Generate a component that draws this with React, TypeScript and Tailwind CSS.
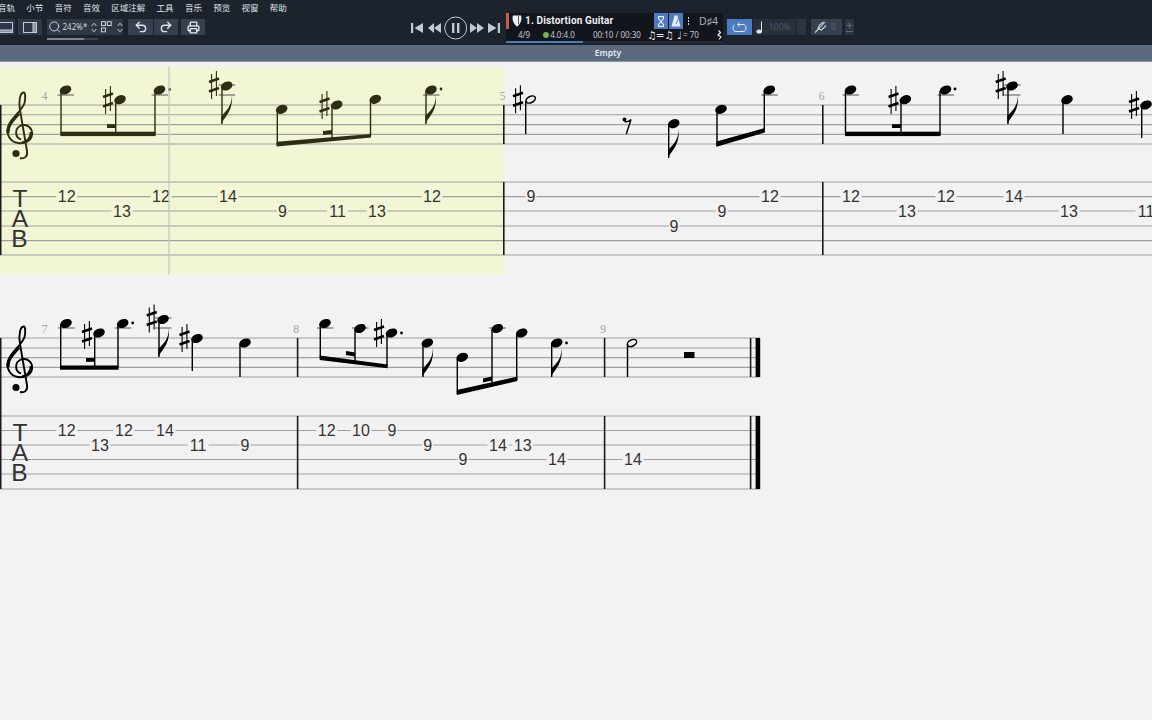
import { Printer, Redo2, Search, Undo2 } from "lucide-react"

const MENU = ["音轨", "小节", "音符", "音效", "区域注解", "工具", "音乐", "预览", "视窗", "帮助"]

type NoteData = {
  x: number
  y: number
  sx: number
  end: number
  ledgers?: number[]
  sharp?: [number, number]
  dot?: [number, number]
  flag?: boolean
  hollow?: boolean
}

type TabNum = [string, number, number]

// tab numbers: text, center x, string y
const TAB_TOP: TabNum[] = [
  ["12", 66.7, 196.6], ["13", 122, 211], ["12", 161, 196.6], ["14", 228, 196.6], ["9", 282.5, 211],
  ["11", 337.5, 211], ["13", 377, 211], ["12", 432, 196.6], ["9", 531, 196.6], ["9", 674, 226],
  ["9", 722, 211], ["12", 770, 196.6], ["12", 851, 196.6], ["13", 907, 211], ["12", 946, 196.6],
  ["14", 1014, 196.6], ["13", 1069, 211], ["11", 1146, 211],
]

const TAB_BOTTOM: TabNum[] = [
  ["12", 66.7, 430.5], ["13", 100, 445], ["12", 124, 430.5], ["14", 165, 430.5], ["11", 198, 445],
  ["9", 245, 445], ["12", 326.7, 430.5], ["10", 361, 430.5], ["9", 392, 430.5], ["9", 427.7, 445],
  ["9", 463, 459.5], ["14", 498, 445], ["13", 522.7, 445], ["14", 557, 459.5], ["14", 633, 459.5],
]

const SELECTED_NOTES: NoteData[] = [
  { x: 65.5, y: 90, sx: 61, end: 134, ledgers: [95] },
  { x: 120, y: 99.7, sx: 115.7, end: 134, sharp: [108, 100] },
  { x: 159.5, y: 90, sx: 155, end: 134, ledgers: [95], dot: [169.5, 89.5] },
  { x: 226.7, y: 86, sx: 222, end: 124, ledgers: [85, 95], sharp: [214, 85], flag: true },
  { x: 281.7, y: 109.3, sx: 277.3, end: 146 },
  { x: 336.7, y: 105, sx: 332, end: 138, sharp: [324.5, 105] },
  { x: 375.3, y: 99.3, sx: 370.5, end: 136 },
  { x: 431, y: 90, sx: 426, end: 124, ledgers: [95], dot: [441, 89], flag: true },
]

const PLAIN_NOTES: NoteData[] = [
  { x: 530.7, y: 99.5, sx: 525.7, end: 134, sharp: [518, 99.3], hollow: true },
  { x: 673.7, y: 123.7, sx: 668.7, end: 158, flag: true },
  { x: 721, y: 109.3, sx: 717, end: 146 },
  { x: 769.3, y: 90, sx: 764.3, end: 132, ledgers: [95] },
  { x: 850.5, y: 90, sx: 845.5, end: 134, ledgers: [95] },
  { x: 905.3, y: 99.7, sx: 901, end: 134, sharp: [893.5, 100] },
  { x: 945.5, y: 90, sx: 940, end: 134, ledgers: [95], dot: [955, 89] },
  { x: 1012, y: 86, sx: 1008, end: 124, ledgers: [85, 95], sharp: [1000.7, 85], flag: true },
  { x: 1067, y: 99.7, sx: 1063, end: 134 },
  { x: 1146, y: 105, sx: 1141.7, end: 138, sharp: [1134, 105] },
]

const SECOND_NOTES: NoteData[] = [
  { x: 66, y: 323.5, sx: 60.7, end: 367, ledgers: [328] },
  { x: 99, y: 333, sx: 94.7, end: 367, sharp: [87, 335] },
  { x: 122.7, y: 323.5, sx: 118, end: 367, ledgers: [328], dot: [132.7, 323] },
  { x: 163, y: 319.5, sx: 159, end: 357, ledgers: [318, 328], sharp: [151.7, 318.5], flag: true },
  { x: 197, y: 338.5, sx: 192.3, end: 371, sharp: [184.5, 338] },
  { x: 245, y: 343, sx: 240, end: 377 },
  { x: 325, y: 323.5, sx: 320.3, end: 358, ledgers: [328] },
  { x: 360, y: 328.5, sx: 355, end: 362, ledgers: [328] },
  { x: 391.5, y: 333, sx: 387, end: 366, sharp: [379, 333], dot: [401.5, 333] },
  { x: 427.3, y: 343, sx: 423, end: 377, flag: true },
  { x: 462.3, y: 357.3, sx: 457.3, end: 394 },
  { x: 497.3, y: 328.5, sx: 492, end: 384, ledgers: [328] },
  { x: 521.7, y: 333, sx: 516.7, end: 380 },
  { x: 556.7, y: 343, sx: 551.7, end: 377, dot: [566.5, 343], flag: true },
  { x: 632, y: 343, sx: 627.5, end: 377, hollow: true },
]

function Sharp({ x, y }: { x: number; y: number }) {
  return (
    <g>
      <path d={`M${x - 2.4} ${y - 11}V${y + 14}M${x + 2.4} ${y - 14}V${y + 11}`} stroke="currentColor" strokeWidth="1.1" />
      <path d={`M${x - 5} ${y - 3}L${x + 5} ${y - 6.5}M${x - 5} ${y + 6.5}L${x + 5} ${y + 3}`} stroke="currentColor" strokeWidth="2.6" />
    </g>
  )
}

function Note({ x, y, sx, end, ledgers, sharp, dot, flag, hollow }: NoteData) {
  return (
    <g>
      {ledgers?.map((ly) => (
        <line key={ly} x1={x - 8} x2={x + 8.5} y1={ly} y2={ly} stroke="#555" strokeWidth="1" />
      ))}
      {hollow ? (
        <ellipse cx={x} cy={y} rx="5" ry="3.1" transform={`rotate(-28 ${x} ${y})`} fill="none" stroke="currentColor" strokeWidth="1.5" />
      ) : (
        <ellipse cx={x} cy={y} rx="6" ry="4.3" transform={`rotate(-22 ${x} ${y})`} fill="currentColor" />
      )}
      <line x1={sx} x2={sx} y1={y + 1} y2={end} stroke="currentColor" strokeWidth="1.4" />
      {flag && (
        <path
          d={`M${sx - 0.7} ${end}C${sx + 3} ${end - 8} ${sx + 11} ${end - 12} ${sx + 10} ${end - 29}C${sx + 9.6} ${end - 17} ${sx + 4} ${end - 13} ${sx - 0.7} ${end - 8}Z`}
          fill="currentColor"
        />
      )}
      {sharp && <Sharp x={sharp[0]} y={sharp[1]} />}
      {dot && <circle cx={dot[0]} cy={dot[1]} r="1.4" fill="currentColor" />}
    </g>
  )
}

function Clef({ dy = 0 }: { dy?: number }) {
  return (
    <g transform={`translate(0 ${dy})`} fill="none" stroke="currentColor">
      <path
        d="M21 139.5C15 137.5 14 128.5 21 125.5C28 123.5 33 129 32 135C31 141 24 144 18 143C10 142 6 134 8 127C10 119 22 111 24.5 103C26 97 25 92 23.5 92.5C20 93 18.5 101 20 110L27 151C28 157 24 159 20 158"
        strokeWidth="1.9"
      />
      <path d="M8 133C7.5 125 14 118.5 19 113.5" strokeWidth="3.2" />
      <path d="M31 132C31.5 138 27 142 22 142.7" strokeWidth="2.6" />
      <circle cx="16" cy="153.5" r="3.6" fill="currentColor" stroke="none" />
    </g>
  )
}

function TabLetters({ dy = 0 }: { dy?: number }) {
  return (
    <g className="font-['Liberation_Sans',sans-serif] text-[24.5px] fill-[#333]" textAnchor="middle">
      <text x="20" y={206.8 + dy}>T</text>
      <text x="20" y={227.2 + dy}>A</text>
      <text x="19.5" y={247 + dy}>B</text>
    </g>
  )
}

function TabNumbers({ items, bg }: { items: TabNum[]; bg: (x: number) => string }) {
  return (
    <g>
      {items.map(([n, x, y]) => {
        const w = n.length === 1 ? 11 : 21
        return (
          <g key={`${n}-${x}`}>
            <rect x={x - w / 2} y={y - 5} width={w} height="10" fill={bg(x)} />
            <text x={x} y={y + 5.7} textAnchor="middle" className="font-['Liberation_Sans',sans-serif] text-[16px] fill-[#333]">
              {n}
            </text>
          </g>
        )
      })}
    </g>
  )
}

function BarNumber({ x, y, n }: { x: number; y: number; n: string }) {
  return (
    <text x={x} y={y} textAnchor="middle" className="font-['Liberation_Serif',serif] text-[11.5px] fill-[#a3a3a3]">
      {n}
    </text>
  )
}

function Lines({ ys, x2 }: { ys: number[]; x2: number }) {
  return (
    <g stroke="#a0a0a0" strokeWidth="1.1">
      {ys.map((y) => (
        <line key={y} x1="0" x2={x2} y1={y} y2={y} />
      ))}
    </g>
  )
}

function Bar({ x, y1, y2, w = 1.6 }: { x: number; y1: number; y2: number; w?: number }) {
  return <line x1={x} x2={x} y1={y1} y2={y2} stroke="#1a1a1a" strokeWidth={w} />
}

function FirstSystem() {
  const tabBg = (x: number) => (x < 504 ? "#f3f6d5" : "#f2f2f2")
  return (
    <svg width="1152" height="218" viewBox="0 62 1152 218" className="block shrink-0">
      <rect x="0" y="67" width="504" height="208" fill="#f3f6d5" />
      <Lines ys={[105, 114.8, 124.6, 134.4, 144]} x2={1152} />
      <Lines ys={[182, 196.6, 211, 226, 240.6, 255]} x2={1152} />
      <TabNumbers items={TAB_TOP} bg={tabBg} />
      {[503.8, 822.8].map((x) => (
        <g key={x}>
          <Bar x={x} y1={105} y2={144} />
          <Bar x={x} y1={182} y2={255} />
        </g>
      ))}
      <Bar x={0.5} y1={105} y2={255} w={2} />
      <BarNumber x={44.5} y={100} n="4" />
      <BarNumber x={502.5} y={100} n="5" />
      <BarNumber x={821.5} y={100} n="6" />
      <TabLetters />
      <g className="text-[#2c2d12]">
        <Clef />
        {SELECTED_NOTES.map((n) => (
          <Note key={n.x} {...n} />
        ))}
        <rect x="60.4" y="131.7" width="95.2" height="4.4" fill="currentColor" />
        <rect x="107" y="124.2" width="9" height="3.8" fill="currentColor" />
        <polygon points="276.7,141.8 371,134 371,137.6 276.7,146.6" fill="currentColor" />
        <polygon points="323,131 332,130 332,134 323,135" fill="currentColor" />
      </g>
      <g className="text-black">
        {PLAIN_NOTES.map((n) => (
          <Note key={n.x} {...n} />
        ))}
        <circle cx="624.5" cy="119.5" r="2" fill="currentColor" />
        <path d="M624.5 121.5C627 122 629.5 121.5 631 119.5L626.3 134" fill="none" stroke="currentColor" strokeWidth="1.4" />
        <polygon points="716.5,141.5 764.8,128 764.8,132.5 716.5,146.8" fill="currentColor" />
        <rect x="845" y="131.7" width="95.6" height="4.4" fill="currentColor" />
        <rect x="892" y="124.2" width="9" height="3.8" fill="currentColor" />
      </g>
      <line x1="169" x2="169" y1="67" y2="275" stroke="#a9d3cd" strokeWidth="1.2" />
    </svg>
  )
}

function SecondSystem() {
  return (
    <svg width="1152" height="200" viewBox="0 300 1152 200" className="mt-5 block shrink-0">
      <Lines ys={[338, 348, 357.6, 367.4, 377]} x2={760} />
      <Lines ys={[416, 430.5, 445, 459.5, 474, 489]} x2={760} />
      <TabNumbers items={TAB_BOTTOM} bg={() => "#f2f2f2"} />
      {[297.6, 604.6].map((x) => (
        <g key={x}>
          <Bar x={x} y1={338} y2={377} />
          <Bar x={x} y1={416} y2={489} />
        </g>
      ))}
      <Bar x={0.5} y1={338} y2={489} w={2} />
      <Bar x={750.6} y1={338} y2={377} />
      <Bar x={750.6} y1={416} y2={489} />
      <rect x="755.6" y="338" width="4.6" height="39" fill="#000" />
      <rect x="755.6" y="416" width="4.6" height="73" fill="#000" />
      <BarNumber x={44.5} y={333} n="7" />
      <BarNumber x={296} y={333} n="8" />
      <BarNumber x={603} y={333} n="9" />
      <TabLetters dy={234} />
      <g className="text-black">
        <Clef dy={234} />
        {SECOND_NOTES.map((n) => (
          <Note key={n.x} {...n} />
        ))}
        <rect x="60" y="365.5" width="58.6" height="4.2" fill="currentColor" />
        <rect x="86" y="358" width="9" height="3.8" fill="currentColor" />
        <polygon points="319.7,355.6 387.6,364.6 387.6,368.2 319.7,360" fill="currentColor" />
        <polygon points="346,351 355,352.4 355,356.4 346,355" fill="currentColor" />
        <polygon points="456.8,390 517.3,376.6 517.3,381 456.8,395" fill="currentColor" />
        <polygon points="483,378.4 492,376.6 492,380.4 483,382.4" fill="currentColor" />
        <rect x="684" y="352" width="10.5" height="6" fill="currentColor" />
      </g>
    </svg>
  )
}

function PanelIcon({ side }: { side?: boolean }) {
  return (
    <svg width="14" height="11" viewBox="0 0 14 11" fill="none" stroke="#c3c9d2" strokeWidth="1">
      <rect x="0.5" y="0.5" width="13" height="10" />
      {side ? <rect x="10" y="0.5" width="3.5" height="10" fill="#8c95a3" /> : <rect x="0.5" y="8" width="13" height="2.5" fill="#8c95a3" />}
    </svg>
  )
}

function Stepper() {
  return (
    <svg width="6" height="11" viewBox="0 0 6 11" fill="none" stroke="#c5cbd4" strokeWidth="1">
      <path d="M0.7 4L3 1.2L5.3 4M0.7 7L3 9.8L5.3 7" />
    </svg>
  )
}

function LeftTools() {
  return (
    <div className="flex w-[411px] shrink-0 flex-col">
      <div className="-ml-[2px] flex h-[19px] items-start gap-[11.3px] pt-[1px] font-['Noto_Sans_CJK_SC',sans-serif] text-[8.5px] leading-3 text-[#dfe3e8]">
        {MENU.map((m) => (
          <span key={m}>{m}</span>
        ))}
      </div>
      <div className="flex h-4 items-stretch">
        <div className="flex w-[15px] items-center justify-end overflow-hidden bg-[#2f3846] pr-[2px]">
          <div className="shrink-0">
            <PanelIcon />
          </div>
        </div>
        <div className="ml-[3px] flex w-6 items-center justify-center bg-[#2f3846]">
          <PanelIcon side />
        </div>
        <div className="relative ml-[5px] flex w-[76px] items-center bg-[#2f3846]">
          <Search className="ml-[1px] h-[14px] w-[14px] text-[#d5dae2]" strokeWidth={1.7} />
          <span className="ml-[1px] font-['Noto_Sans',sans-serif] text-[8px] text-[#cfd4db]">242%*</span>
          <span className="ml-[4px]">
            <Stepper />
          </span>
          <svg className="ml-[4px]" width="11" height="12" viewBox="0 0 11 12" fill="none" stroke="#d5dae2" strokeWidth="1">
            <rect x="0.5" y="0.5" width="4" height="4" />
            <rect x="6.5" y="0.5" width="4" height="4" />
            <rect x="0.5" y="7" width="4" height="4" />
          </svg>
          <span className="ml-[5px]">
            <Stepper />
          </span>
          <div className="absolute top-[19px] left-0 h-[2px] w-[51px] bg-[#3b4452]">
            <div className="h-full w-[37px] bg-[#7d8794]" />
          </div>
        </div>
        <div className="ml-[5px] flex w-[25px] items-center justify-center bg-[#36404f]">
          <Undo2 className="h-[14px] w-[14px] text-[#e0e4ea]" strokeWidth={2.4} />
        </div>
        <div className="ml-px flex w-[24px] items-center justify-center bg-[#36404f]">
          <Redo2 className="h-[14px] w-[14px] text-[#e0e4ea]" strokeWidth={2.4} />
        </div>
        <div className="ml-[3px] flex w-6 items-center justify-center bg-[#36404f]">
          <Printer className="h-[13px] w-[13px] text-[#e8ebef]" strokeWidth={2.4} />
        </div>
      </div>
    </div>
  )
}

function Transport() {
  return (
    <svg width="90" height="24" viewBox="0 0 90 24" className="mt-[16px] shrink-0" fill="#c3c9d2">
      <rect x="0" y="7" width="2.2" height="10" />
      <polygon points="12,7 12,17 3.5,12" />
      <polygon points="23,7 23,17 17,12" />
      <polygon points="30,7 30,17 23,12" />
      <circle cx="44.7" cy="12" r="11" fill="none" stroke="#c3c9d2" strokeWidth="1" />
      <rect x="41" y="7" width="2.4" height="10" />
      <rect x="46" y="7" width="2.4" height="10" />
      <polygon points="59,7 59,17 66,12" />
      <polygon points="66,7 66,17 73,12" />
      <polygon points="77,7 77,17 85.5,12" />
      <rect x="86.8" y="7" width="2.2" height="10" />
    </svg>
  )
}

function TrackPanel() {
  return (
    <div className="mt-[13px] ml-[5px] flex h-[30px] w-[217px] shrink-0 flex-col bg-[#12151b]">
      <div className="flex h-4 items-stretch">
        <div className="w-[3px] bg-[#bf604f]" />
        <svg className="mt-[2px] ml-[3px]" width="10" height="12" viewBox="0 0 10 12" fill="#eceff2">
          <path d="M1 0.5H9C10 3 9.5 8 5 11.8C0.5 8 0 3 1 0.5Z" />
          <line x1="6.5" y1="1" x2="6.5" y2="9" stroke="#12151b" strokeWidth="0.7" />
        </svg>
        <span className="ml-[3px] w-[129px] font-['Roboto',sans-serif] text-[10px] leading-4 font-bold tracking-[0.15px] text-[#eef0f3]">
          1. Distortion Guitar
        </span>
        <div className="flex w-[14px] items-center justify-center bg-[#4c7bc0]">
          <svg width="8" height="11" viewBox="0 0 8 11" fill="none" stroke="#e8eef7" strokeWidth="1.1">
            <path d="M1 0.6H7M1 10.4H7M1.5 1V2.5L6.5 8.5V10M6.5 1V2.5L1.5 8.5V10" />
          </svg>
        </div>
        <div className="ml-px flex w-[14px] items-center justify-center bg-[#4c7bc0]">
          <svg width="10" height="12" viewBox="0 0 10 12" fill="#e8eef7">
            <path d="M3.5 0.5H6.5L9.5 11.5H0.5Z" />
            <path d="M5 9L7.5 3" stroke="#4c7bc0" strokeWidth="0.9" />
          </svg>
        </div>
        <div className="ml-[4px] flex w-[3px] flex-col items-center justify-center gap-[1.5px]">
          <div className="h-[1.5px] w-[1.5px] bg-[#d8dce2]" />
          <div className="h-[1.5px] w-[1.5px] bg-[#d8dce2]" />
          <div className="h-[1.5px] w-[1.5px] bg-[#d8dce2]" />
        </div>
        <span className="ml-[9px] font-['Noto_Sans',sans-serif] text-[10.5px] leading-4 text-[#a9afb8]">
          D♯4
        </span>
      </div>
      <div className="flex h-3 items-center font-['Noto_Sans',sans-serif] text-[8px] text-[#c6cbd2]">
        <span className="ml-[12px]">4/9</span>
        <span className="ml-[13px] h-[6px] w-[6px] rounded-full bg-[#6fb34a]" />
        <span className="ml-px">4.0:4.0</span>
        <span className="ml-[18px]">00:10 / 00:30</span>
        <span className="ml-[6px] font-['DejaVu_Sans',sans-serif] text-[10.5px] leading-3 tracking-[-0.5px] text-[#eceef1]">♫=♫</span>
        <span className="ml-[4px] font-['DejaVu_Sans',sans-serif] text-[10.5px] leading-3 text-[#eceef1]">♩</span>
        <span className="ml-px">= 70</span>
        <svg className="ml-[18px]" width="5" height="10" viewBox="0 0 5 10" fill="none" stroke="#e6e8ec" strokeWidth="1.2">
          <path d="M1.5 0.5L3.5 2.5L1 5L4 7L2 9.5" />
        </svg>
      </div>
      <div className="h-[2px] bg-[#242a33]">
        <div className="h-full w-[77px] bg-[#4c7bc0]" />
      </div>
    </div>
  )
}

function RightTools() {
  return (
    <div className="mt-[19px] ml-1 flex h-4 items-stretch">
      <div className="flex w-[25px] items-center justify-center bg-[#4c7bc0]">
        <svg width="15" height="11" viewBox="0 0 15 11" fill="none" stroke="#e4ecf8" strokeWidth="1">
          <path d="M6 2.5H11C13 2.5 14 4 14 6C14 8 13 9.5 11 9.5H4C2 9.5 1 8 1 6C1 4.5 1.5 3.5 2.5 3" />
          <path d="M7.5 0.5L5.3 2.5L7.5 4.5" />
        </svg>
      </div>
      <div className="ml-px flex w-[43px] items-center bg-[#28303c]">
        <svg className="ml-[3px]" width="7" height="13" viewBox="0 0 7 13" fill="#dfe3e8">
          <ellipse cx="3.2" cy="10.5" rx="2.8" ry="2" />
          <rect x="5" y="0.5" width="1" height="10" />
        </svg>
        <span className="ml-[6px] font-['Noto_Sans',sans-serif] text-[8.5px] text-[#4d5766]">100%</span>
      </div>
      <div className="ml-px flex w-[9px] items-center justify-center bg-[#2c3542] text-[8px] text-[#4d5766]">
        ◦
      </div>
      <div className="ml-[5px] flex w-[31px] items-center bg-[#36404f]">
        <svg className="ml-[3px]" width="13" height="12" viewBox="0 0 13 12" fill="none" stroke="#cfd4db" strokeWidth="1.1">
          <path d="M1 11.5L5.5 7M5.5 7L11 1M5 4.5L9.5 1M7.5 9L12 4.5M5 4.5L4 7.5L7.5 9" />
        </svg>
        <span className="ml-[4px] font-['Noto_Sans',sans-serif] text-[8.5px] text-[#5a6473]">0</span>
      </div>
      <div className="ml-[3px] flex w-[9px] flex-col items-center justify-center gap-[2px] bg-[#2c3542]">
        <svg width="7" height="7" viewBox="0 0 7 7" stroke="#626c7a" strokeWidth="1.2">
          <path d="M3.5 0.5V6.5M0.5 3.5H6.5" />
        </svg>
        <div className="h-px w-[7px] bg-[#626c7a]" />
      </div>
    </div>
  )
}

export default function App() {
  return (
    <div className="flex h-[720px] w-[1152px] flex-col overflow-hidden bg-[#f2f2f2]">
      <header className="flex h-[45px] shrink-0 bg-[#1d232c]">
        <LeftTools />
        <Transport />
        <TrackPanel />
        <RightTools />
      </header>
      <div className="flex h-[17px] shrink-0 items-center justify-center border-b border-[#8d98a6] bg-[#5b6a7d] pl-[64px] font-['Noto_Sans',sans-serif] text-[8.5px] font-semibold text-[#e6e9ed]">
        Empty
      </div>
      <main className="flex flex-col">
        <FirstSystem />
        <SecondSystem />
      </main>
    </div>
  )
}
